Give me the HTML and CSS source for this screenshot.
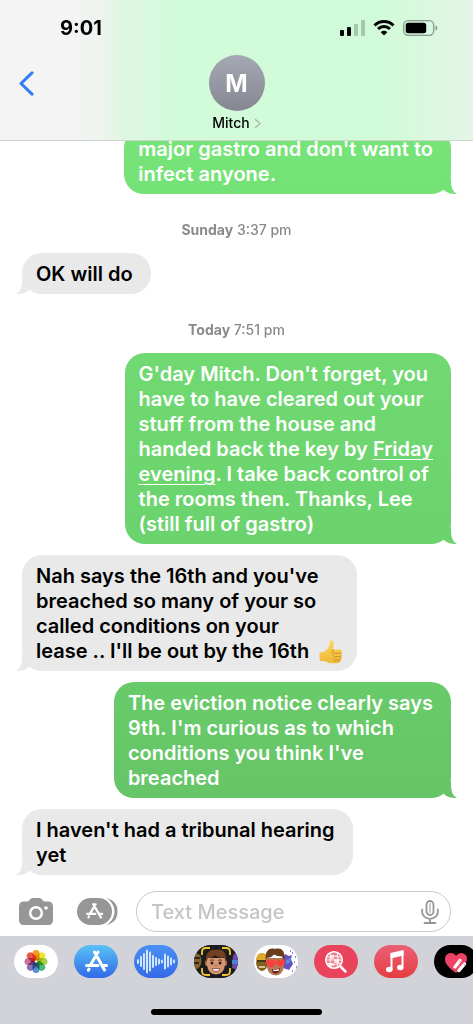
FILE: index.html
```
<!DOCTYPE html>
<html lang="en">
<head>
  <meta charset="UTF-8">
  <meta name="viewport" content="width=device-width, initial-scale=1.0">
  <title>Messages - Mitch</title>
  <link rel="stylesheet" href="styles.css">
</head>
<body>
  <header class="header">
    <div class="status-bar">
      <span class="time">9:01</span>
      <div class="status-icons">
        <svg width="25" height="16" viewBox="0 0 25 16">
          <rect x="0" y="10" width="4" height="6" rx="1"/>
          <rect x="7" y="7" width="4" height="9" rx="1"/>
          <rect x="14" y="4" width="4" height="12" rx="1" opacity=".2"/>
          <rect x="21" y="0" width="4" height="16" rx="1" opacity=".2"/>
        </svg>
        <svg width="22" height="16" viewBox="0 0 22 16">
          <path d="M1.5 5.5a13.5 13.5 0 0 1 19 0M5 9a8.5 8.5 0 0 1 12 0" fill="none" stroke="#000" stroke-width="3"/>
          <path d="M11 15.5L7.7 12.2a4.7 4.7 0 0 1 6.6 0z"/>
        </svg>
        <svg width="35" height="16" viewBox="0 0 35 16">
          <rect x=".7" y=".7" width="30" height="14.6" rx="4.5" fill="none" stroke="#000" stroke-opacity=".38" stroke-width="1.3"/>
          <rect x="2.7" y="2.7" width="20.5" height="10.6" rx="2.5"/>
          <path d="M32.5 5.5c2.5.8 2.5 4.2 0 5z" opacity=".4"/>
        </svg>
      </div>
    </div>
    <div class="nav">
      <button class="back" aria-label="Back">
        <svg width="15" height="25" viewBox="0 0 15 25"><path d="M13 1.8L2 12.5L13 23.2" fill="none" stroke="#347bf6" stroke-width="3" stroke-linecap="round" stroke-linejoin="round"/></svg>
      </button>
      <button class="contact">
        <span class="avatar">M</span>
        <span class="name">Mitch
          <svg width="7" height="11" viewBox="0 0 7 11"><path d="M1 1l5 4.500l-5 4.500" fill="none" stroke="#a9bcab" stroke-width="1.500"/></svg>
        </span>
      </button>
    </div>
  </header>

  <main class="thread">
    <div class="bubble sent oldest">major gastro and don't want to<br>infect anyone.</div>
    <time class="stamp"><b>Sunday</b> 3:37 pm</time>
    <div class="bubble received">OK will do</div>
    <time class="stamp"><b>Today</b> 7:51 pm</time>
    <div class="bubble sent">G'day Mitch. Don't forget, you<br>have to have cleared out your<br>stuff from the house and<br>handed back the key by <a href="#">Friday<br>evening</a>. I take back control of<br>the rooms then. Thanks, Lee<br>(still full of gastro)</div>
    <div class="bubble received">Nah says the 16th and you've<br>breached so many of your so<br>called conditions on your<br>lease .. I'll be out by the 16th <svg class="emoji" width="24" height="24" viewBox="0 0 24 24" role="img" aria-label="thumbs up">
        <defs>
          <linearGradient id="skin" x1="0" y1="0" x2="0" y2="1"><stop offset="0" stop-color="#fbd75c"/><stop offset="1" stop-color="#f0b83a"/></linearGradient>
        </defs>
        <path d="M.8 12.500C4 12.500 7 11 9 8c1.500-2.300 1.700-3.500 1.900-6C11 .2 13.800 0 14.400 2.200c.7 2.500.1 5.300-.6 7.400h7c2.400 0 2.700 2.700 1.100 3.500 1.700.8 1.500 3 .1 3.600 1.200.9.900 2.800-.5 3.300.5 1.700-.5 2.700-2 2.900-4.500.6-9 .7-12-1.100-2-.8-4-.8-6.200-.8C.3 18 .2 15.500.8 12.500z" fill="url(#skin)"/>
        <path d="M14 9.700c-.8 1.200-1.200 2.200-1 3.600M22 13.200h-6.500M22 16.700h-6.500M21.300 20h-5.500" fill="none" stroke="#c98a22" stroke-width=".9" stroke-linecap="round"/>
        <path d="M15.500 10.500c-1.700.4-1.700 2.300 0 2.700-1.500.7-1.500 2.800 0 3.500-1.300.7-1.100 2.700.3 3.300-1 .9-.6 2 .5 2.400" fill="none" stroke="#d99c2b" stroke-width=".7"/>
      </svg></div>
    <div class="bubble sent newest">The eviction notice clearly says<br>9th. I'm curious as to which<br>conditions you think I've<br>breached</div>
    <div class="bubble received">I haven't had a tribunal hearing<br>yet</div>
  </main>

  <form class="composer">
    <div class="tools">
      <button type="button" aria-label="Camera">
        <svg width="34" height="27" viewBox="0 0 34 27">
          <path d="M5 3.500h4L11.500 1Q12.300 0 13.500 0h7q1.200 0 2 1L25 3.500h4q5 0 5 5V22q0 5-5 5H5q-5 0-5-5V8.500q0-5 5-5z" fill="#969696"/>
          <circle cx="17" cy="15" r="5.800" fill="none" stroke="#fff" stroke-width="2.500"/>
          <circle cx="27" cy="10" r="1.800" fill="#fff"/>
        </svg>
      </button>
      <button type="button" aria-label="Apps">
        <svg width="41" height="27" viewBox="0 0 41 27">
          <path d="M29 0q11.500 2.500 11.500 13.500T29 27z" fill="#969696"/>
          <rect x="-1" y="-1.500" width="38.500" height="30" rx="15" fill="#fff"/>
          <rect width="35" height="27" rx="13.500" fill="#969696"/>
          <path d="M18.600 6.200L12.900 15.900M16.200 6.200L22.800 17.500M10.200 15.900h8M21.900 15.900h3.200M11.900 18.500l-.4.700M23.500 18.700l.4.700" fill="none" stroke="#fff" stroke-width="2.300" stroke-linecap="round"/>
        </svg>
      </button>
    </div>
    <div class="field">
      <input type="text" placeholder="Text Message" aria-label="Text Message">
      <button type="button" aria-label="Dictate">
        <svg width="18" height="24" viewBox="0 0 18 24">
          <g fill="none" stroke="#969696" stroke-width="1.800" stroke-linecap="round">
            <rect x="5.500" y="1" width="7" height="14" rx="3.500"/>
            <path d="M9 4v8" stroke="#c4c4c4"/>
            <path d="M1.200 9.500v2.800a7.800 6.500 0 0 0 15.600 0V9.500M9 18.800V23M3.500 23h11"/>
          </g>
        </svg>
      </button>
    </div>
  </form>

  <footer class="dock">
    <nav class="apps">
      <button class="app photos" aria-label="Photos">
        <svg viewBox="0 0 44 33">
          <g class="petals">
            <rect x="18.500" y="5" width="7" height="10.500" rx="3.500" fill="#f59a23"/>
            <rect x="18.500" y="5" width="7" height="10.500" rx="3.500" fill="#ece52c" transform="rotate(45 22 16.500)"/>
            <rect x="18.500" y="5" width="7" height="10.500" rx="3.500" fill="#a8cf45" transform="rotate(90 22 16.500)"/>
            <rect x="18.500" y="5" width="7" height="10.500" rx="3.500" fill="#4bb37b" transform="rotate(135 22 16.500)"/>
            <rect x="18.500" y="5" width="7" height="10.500" rx="3.500" fill="#5390cf" transform="rotate(180 22 16.500)"/>
            <rect x="18.500" y="5" width="7" height="10.500" rx="3.500" fill="#8c72b5" transform="rotate(225 22 16.500)"/>
            <rect x="18.500" y="5" width="7" height="10.500" rx="3.500" fill="#c870a0" transform="rotate(270 22 16.500)"/>
            <rect x="18.500" y="5" width="7" height="10.500" rx="3.500" fill="#e8594a" transform="rotate(315 22 16.500)"/>
          </g>
        </svg>
      </button>
      <button class="app store" aria-label="App Store">
        <svg viewBox="0 0 44 33">
          <path d="M24 7L16.500 20M20.500 7L30.500 25M12.500 20.500h11.500M29 20.500h3.500M15 24l-.6 1.200" fill="none" stroke="#fff" stroke-width="3" stroke-linecap="round"/>
        </svg>
      </button>
      <button class="app audio" aria-label="Audio">
        <svg viewBox="0 0 44 33">
          <path d="M4 15v3M7 12v9M10 9v15M13 5.500v22M16 7.500v18M19 11v11M22 13v7M25 14.500v4M28 15.500v2M31 9.500v14M34 11.500v10M37 13.500v6M40 15.500v2" stroke="#d9ebff" stroke-width="1.900" stroke-linecap="round"/>
        </svg>
      </button>
      <button class="app memoji" aria-label="Memoji">
        <svg viewBox="0 0 44 33">
          <ellipse cx="1.500" cy="16" rx="6" ry="8" fill="#80652e"/>
          <path d="M0 13h6M0 18h5" stroke="#332718" stroke-width="2"/>
          <path d="M39 10l5-3v18l-6-2z" fill="#684ba9"/>
          <path d="M38 15h6v4h-6z" fill="#4f7fd2"/>
          <path d="M8 10V7q0-4 4-4h4M28 3h4q4 0 4 4v3M36 23v3q0 4-4 4h-4M16 30h-4q-4 0-4-4v-3" fill="none" stroke="#f4c430" stroke-width="1.800"/>
          <ellipse cx="13" cy="18" rx="2" ry="3" fill="#b87858"/>
          <ellipse cx="31" cy="18" rx="2" ry="3" fill="#b87858"/>
          <path d="M13 13h18v7q-1 9-9 9.500Q14 29 13 20z" fill="#d59672"/>
          <path d="M12 17C11 8 16 3.500 22 5c6-2 11 2 10 12l-2-4.500q-6 1-9-2.500-2 3-7 3z" fill="#704020"/>
          <path d="M16 15.500q2-1.500 4 0M24 15.500q2-1.500 4 0" fill="none" stroke="#60351e"/>
          <circle cx="18" cy="18" r="1.500" fill="#2e1d18"/>
          <circle cx="26" cy="18" r="1.500" fill="#2e1d18"/>
          <path d="M21 20.500q1 1 2 0" fill="none" stroke="#a5664c"/>
          <path d="M18 23.500h8q-1 3-4 3t-4-3z" fill="#fff" stroke="#874634" stroke-width=".8"/>
        </svg>
      </button>
      <button class="app stickers" aria-label="Stickers">
        <svg viewBox="0 0 44 33">
          <ellipse cx="8" cy="17" rx="6" ry="9" fill="#806020"/>
          <path d="M2 14Q3 8 8 8t6 6v3H2z" fill="#dca92c"/>
          <path d="M3 16h9" stroke="#453620" stroke-width="2"/>
          <path d="M5 22h6" stroke="#f2e4be" stroke-width="1.500"/>
          <path d="M29 13l2-4 4 2 3-1-1 4 2 5-2 3-2 3-6-2z" fill="#6650bf"/>
          <path d="M32 15l5-2-1 5-4 1z" fill="#528ce0"/>
          <path d="M38 8h1M41 12h1M40 17h1M42 22h1M38 26h1M36 6h1" stroke="#7a56d6" stroke-width="1.500"/>
          <path d="M13 13h17v8q-1 9-8 9.500Q14 30 13 22z" fill="#b77951"/>
          <path d="M12 16C10 7 15 2 21 4c7-2 11 3 9 12l-2-4.500q-5 0-8-2-3 4-7 3z" fill="#6a3d1d"/>
          <path d="M17.500 23q-8-4-5-7.500 3-2 4.500.5 2.500-3 4.500 0 1 4-4 7zM26.500 22q-6-3-4-6.500 2-2 4 .5 2-3 4.500-1 1.500 4-4.500 7z" fill="#f5403d"/>
          <path d="M18 24q4 1 8-1 0 5-4 5.500T18 24z" fill="#6b2424"/>
          <path d="M19 24.500q3 .6 6-.5v1.500q-3 1-6 0z" fill="#fff"/>
        </svg>
      </button>
      <button class="app images" aria-label="Image search">
        <svg viewBox="0 0 44 33">
          <circle cx="20" cy="15" r="8.300" fill="#f27c8c" stroke="#fff" stroke-width="1.500"/>
          <path d="M16 10h4v4h-4zM20 14h5v4h-5zM14 18h6v3h-6z" fill="#fff" opacity=".7"/>
          <path d="M12 12.500q8-3 16 0M12 18q8 3 16 0M17 7q-2 8 0 16M23 7q2 8 0 16M11.500 15h17" fill="none" stroke="#fff" stroke-width=".9"/>
          <path d="M26.500 21.500l5 5" stroke="#fff" stroke-width="2.500" stroke-linecap="round"/>
        </svg>
      </button>
      <button class="app music" aria-label="Music">
        <svg viewBox="0 0 44 33">
          <path d="M17.500 24V9.500L28.500 7v15" fill="none" stroke="#fff" stroke-width="2"/>
          <path d="M16.500 8L29.500 5v5.500l-13 3z" fill="#fff"/>
          <ellipse cx="15.300" cy="24.500" rx="3.300" ry="2.800" fill="#fff"/>
          <ellipse cx="26.300" cy="22.500" rx="3.300" ry="2.800" fill="#fff"/>
        </svg>
      </button>
      <button class="app touch" aria-label="Digital Touch">
        <svg viewBox="0 0 44 33">
          <path d="M22 28Q10 20 11 13.500 12 8 17 8q3.500 0 5 3 2-3 5.500-3Q33 9 33 14q0 6-11 14z" fill="#ee4266"/>
          <path d="M26 15.500L21 22M30.500 19l-5.500 6.500" stroke="#fff" stroke-width="3.400" stroke-linecap="round"/>
          <path d="M25 15.500l1.500 1.200M29.500 19l1.500 1.200" stroke="#ee4266" stroke-width=".7"/>
        </svg>
      </button>
    </nav>
    <div class="home-indicator"></div>
  </footer>
</body>
</html>
```
FILE: styles.css
```
* {
  box-sizing: border-box;
}
body {
  margin: 0;
  height: 100vh;
  display: flex;
  flex-direction: column;
  overflow: hidden;
  background: #fff;
  color: #000;
  font-family: Inter, 'Liberation Sans', sans-serif;
}
button {
  border: none;
  padding: 0;
  background: none;
  color: inherit;
  font: inherit;
  cursor: pointer;
}
svg {
  display: block;
}

/* header */
.header {
  flex: none;
  border-bottom: 1px solid #cdd6cf;
  background: linear-gradient(to right, #f4f4f4 12%, #eff4f0 20%, #def6e2 27%, #d2fbd9 37%, #d1fbd8 80%, #d9f8de 90%, #e6f4e8 100%);
}
.status-bar {
  display: flex;
  justify-content: space-between;
  align-items: center;
  height: 55px;
  padding: 0 35px 0 60px;
}
.time {
  font-size: 20px;
  font-weight: 700;
}
.status-icons {
  display: flex;
  gap: 8px;
}
.nav {
  display: grid;
  grid-template-columns: 1fr auto 1fr;
  align-items: start;
  padding: 0 19px 9px;
}
.back {
  display: flex;
  align-items: center;
  justify-self: start;
  height: 56px;
}
.contact {
  display: flex;
  flex-direction: column;
  align-items: center;
  gap: 4px;
}
.avatar {
  display: flex;
  align-items: center;
  justify-content: center;
  width: 56px;
  height: 56px;
  border-radius: 50%;
  background: linear-gradient(#a5a9b5, #858790);
  color: #fff;
  font-size: 24px;
  font-weight: 700;
}
.name {
  display: flex;
  align-items: center;
  gap: 4px;
  font-size: 14px;
  font-weight: 500;
  line-height: 16px;
}

/* messages */
.thread {
  flex: 1;
  min-height: 0;
  display: flex;
  flex-direction: column;
  justify-content: flex-end;
  gap: 11px;
  padding: 0 22px;
  overflow: hidden;
}
.bubble {
  position: relative;
  flex: none;
  padding: 9px 18px 7px 14px;
  border-radius: 20px;
  font-size: 20px;
  font-weight: 600;
  line-height: 25px;
}
.bubble::after {
  content: '';
  position: absolute;
  bottom: 0;
  width: 20px;
  height: 20px;
}
.sent {
  --top: #70d972;
  --bottom: #6bd36d;
  align-self: flex-end;
  background: linear-gradient(var(--top), var(--bottom));
  color: #fff;
}
.sent.oldest {
  --top: #77e47a;
  --bottom: #75e278;
}
.sent.newest {
  --top: #68cb6a;
  --bottom: #66c567;
}
.sent::after {
  right: -6px;
  background: var(--bottom);
  clip-path: path('M14 4C14 13 15 17 20 20C14 20 10 19 7 16L0 10V4Z');
}
.received,
.received::after {
  background: #e9e9e9;
}
.received {
  align-self: flex-start;
}
.received::after {
  left: -6px;
  clip-path: path('M6 4C6 13 5 17 0 20C6 20 10 19 13 16L20 10V4Z');
}
.bubble a {
  color: inherit;
  text-decoration-thickness: 1px;
  text-underline-offset: 3px;
}
.emoji {
  display: inline-block;
  margin: -4px -4px -4px 5px;
  vertical-align: -2px;
}
.stamp {
  flex: none;
  margin: 17px 0 4px;
  color: #8a8a8e;
  font-size: 14px;
  font-weight: 500;
  line-height: 16px;
  text-align: center;
}
.stamp b {
  font-weight: 700;
}

/* composer */
.composer {
  flex: none;
  display: flex;
  align-items: center;
  gap: 18px;
  padding: 16px 22px 4px 19px;
}
.tools {
  flex: none;
  display: flex;
  gap: 24px;
}
.field {
  flex: 1;
  min-width: 0;
  display: flex;
  align-items: center;
  height: 41px;
  padding: 0 11px 0 14px;
  border: 1px solid #c8c8ca;
  border-radius: 21px;
}
.field input {
  flex: 1;
  min-width: 0;
  padding: 0;
  border: none;
  outline: none;
  background: none;
  font: 500 20px Inter, 'Liberation Sans', sans-serif;
}
.field input::placeholder {
  color: #c5c5c7;
}

/* app dock */
.dock {
  flex: none;
  padding: 9px 0;
  background: #d2d3d9;
}
.apps {
  display: flex;
  gap: 16px;
  padding-left: 14px;
  overflow: hidden;
}
.app {
  flex: none;
  width: 44px;
  height: 33px;
  border-radius: 17px;
  overflow: hidden;
}
.photos,
.stickers {
  background: #fff;
}
.petals rect {
  mix-blend-mode: multiply;
}
.store {
  background: linear-gradient(#59c3f6, #3268e8);
}
.audio {
  background: linear-gradient(#4a90f4, #3469e8);
}
.memoji {
  background: #1c1c1c;
}
.images {
  background: #ea435c;
}
.music {
  background: linear-gradient(#ea6076, #e63d42);
}
.touch {
  background: #000;
}
.home-indicator {
  width: 36%;
  height: 6px;
  margin: 31px auto 0;
  border-radius: 3px;
  background: #000;
}
```
